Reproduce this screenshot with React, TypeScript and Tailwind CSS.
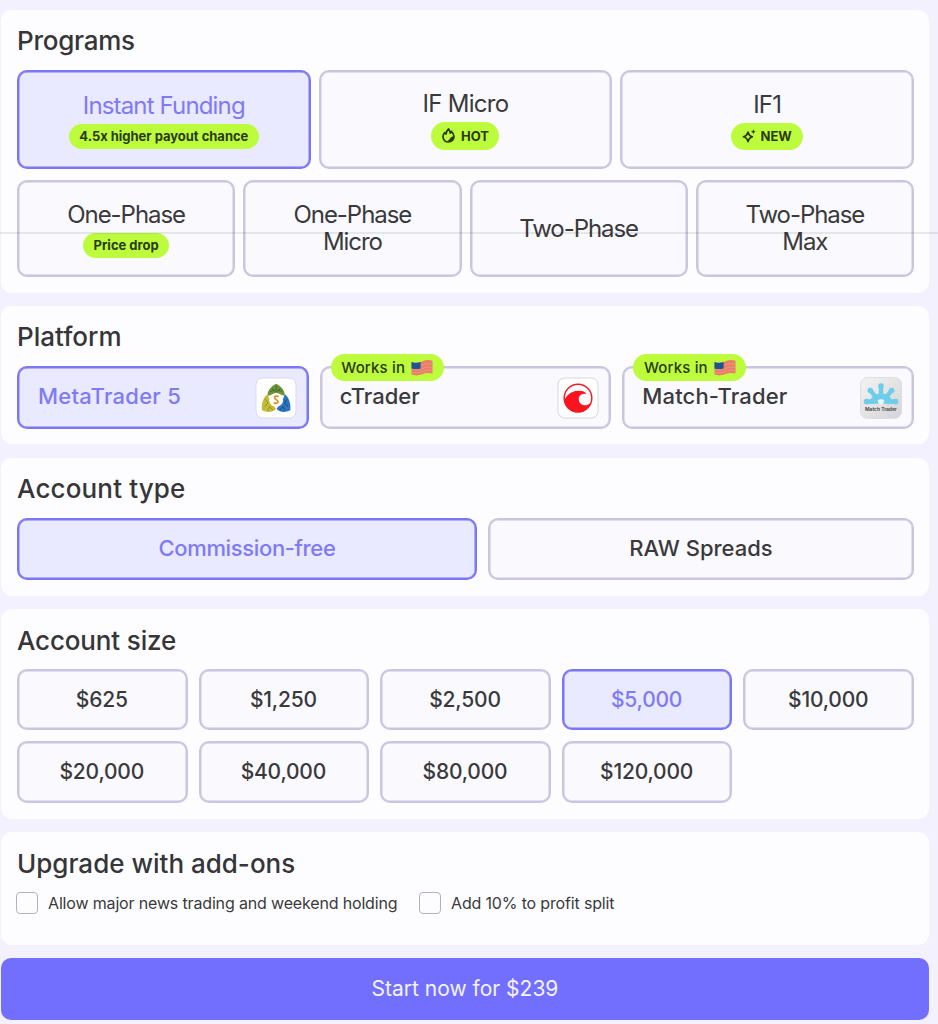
import type { ReactNode } from 'react';

const sizes = ['$625', '$1,250', '$2,500', '$5,000', '$10,000', '$20,000', '$40,000', '$80,000', '$120,000'];

const idle = 'border-[#c9c6e0] bg-[#f9f9fe] text-[#3a3a3c] shadow-[inset_0_0_0_0.5px_#c9c6e0]';
const selected = 'border-[#7b77f2] bg-[#e9e9ff] text-[#7f7af5] shadow-[inset_0_0_0_0.5px_#7b77f2]';

function Section({ title, className, titleClass = '', children }: {
  title: string;
  className: string;
  titleClass?: string;
  children: ReactNode;
}) {
  return (
    <section className={`rounded-[11px] bg-[#fdfdff] pl-4 pr-[15px] ${className}`}>
      <h2 className={`text-[26px] leading-8 font-[550] whitespace-nowrap text-[#363638] ${titleClass}`}>
        <span>{title}</span>
      </h2>
      {children}
    </section>
  );
}

function Box({ active = false, className = '', children }: {
  active?: boolean;
  className?: string;
  children: ReactNode;
}) {
  return (
    <button
      type="button"
      className={`relative flex items-center justify-center rounded-[10px] border-2 whitespace-nowrap ${active ? selected : idle} ${className}`}
    >
      {children}
    </button>
  );
}

function Pill({ className, children }: { className: string; children: ReactNode }) {
  return (
    <span className={`flex items-center justify-center rounded-full bg-[#bcfc3c] text-[#2b3a12] ${className}`}>
      {children}
    </span>
  );
}

function Flame() {
  return (
    <svg className="h-[15px] w-[13px]" viewBox="0 0 13 15" fill="none" stroke="#2b3a12" strokeWidth="1.7" strokeLinejoin="round">
      <path d="M6.6 1C7.6 2.4 8 3.6 8.4 5.2C9 4.7 9.2 4.1 9.4 3.4C11.2 5 12 6.7 12 8.6C12 11.8 9.6 14 6.5 14C3.4 14 1 11.8 1 8.7C1 6.8 1.7 5.5 2.8 4.6C3.2 5.3 3.5 5.7 4 6C4.2 3.9 5.2 2.2 6.6 1Z" />
      <path d="M11.4 8.2C10 8.4 8.6 9.2 8 10.4C7.6 11.4 6.8 12 5.6 12.2C7 14 10 13.6 11.2 11.2Z" fill="#2b3a12" stroke="none" />
    </svg>
  );
}

function Sparkle() {
  return (
    <svg className="h-[14px] w-[14px]" viewBox="0 0 14 14" fill="none" stroke="#2b3a12" strokeWidth="1.7" strokeLinejoin="round">
      <path d="M6 3.2C6.6 5.8 7.7 7 10.4 7.8C7.7 8.6 6.6 9.8 6 12.6C5.4 9.8 4.2 8.6 1.4 7.8C4.2 7 5.4 5.8 6 3.2Z" />
      <path d="M11.3 0.3L12 2L13.7 2.7L12 3.4L11.3 5.1L10.6 3.4L8.9 2.7L10.6 2Z" fill="#2b3a12" stroke="none" />
    </svg>
  );
}

function Flag() {
  return (
    <svg className="h-[18px] w-[22px]" viewBox="0 0 22 18">
      <path d="M0.5 3C5 4.6 8 3.8 11 2.5C14.5 1 18 0.6 21.5 1.8V14.6C18 13.4 14.5 13.8 11 15.2C8 16.4 4.5 17 0.5 15.6Z" fill="#ee7c68" />
      <path d="M0.5 6.5C5 8 8 7.2 11 6C14.5 4.5 18 4.2 21.5 5.3M0.5 10C5 11.5 8 10.7 11 9.5C14.5 8 18 7.7 21.5 8.8M0.5 13.2C5 14.6 8 13.8 11 12.6C14.5 11.1 18 10.8 21.5 11.9" stroke="#df9a7c" strokeWidth="1" fill="none" />
      <path d="M0.5 3C4 4.2 7 4 9.6 3V9.4C6.5 10.4 3.5 10.3 0.5 9.4Z" fill="#205394" />
    </svg>
  );
}

function MetaTraderLogo() {
  return (
    <svg className="h-[42px] w-[42px]" viewBox="0 0 42 42">
      <rect x="1" y="1" width="40" height="40" rx="6.5" fill="#fefefe" stroke="#dcdbe6" />
      <path d="M12.6 19C12.2 13.5 16 9.6 21.2 6.8C26.4 9.6 30 13.5 29.8 19L25.5 17.4C22.8 15.4 19.6 15.4 17 17.4Z" fill="#6f9636" />
      <path d="M12.4 17.2C8 20.5 6.2 27 7 33.2C12.4 35.8 17.6 35.4 21 32L19 29C15.6 28 14.2 25.4 14.4 22Z" fill="#c6bb34" />
      <path d="M30 17.2C34.2 20.5 36 27 35.3 33.2C30 35.8 25 35.4 21.6 32L23.4 29C26.8 28 28.2 25.4 28 22Z" fill="#2c74bd" />
      <g fill="none" strokeWidth="1" opacity=".75">
        <path d="M15 15C17.5 12.6 19.5 12.8 21.2 14.8C23 12.8 25 12.6 27.4 15M21.2 8.5V13M17.5 11.5L19 14.5M25 11.5L23.4 14.5" stroke="#2f5b2b" />
        <path d="M10 22L13 26L9.5 29.5M12.5 33.5L14.5 29.5L17.5 33" stroke="#6f8f32" />
        <path d="M32.4 22L29.4 26L33 29.5M30 33.5L28 29.5L25 33" stroke="#123f78" />
      </g>
      <circle cx="21.2" cy="23" r="6.8" fill="#fffdf4" />
      <path d="M23.7 19.4C20.8 18.6 19.2 19.4 19.6 21C20 22.5 22.8 22.8 23 24.5C23.2 26.4 20.8 26.9 18.8 25.8" stroke="#d88b2d" strokeWidth="1.6" fill="none" />
    </svg>
  );
}

function CTraderLogo() {
  return (
    <svg className="h-[42px] w-[42px]" viewBox="0 0 42 42">
      <rect x="1" y="1" width="40" height="40" rx="6.5" fill="#fefefe" stroke="#d8d6dc" />
      <circle cx="21" cy="21" r="13.8" fill="none" stroke="#f21e26" strokeWidth="1.5" />
      <path d="M7.4 24C8.6 18.6 14 14.2 21 13.8C25.4 13.6 28 14.6 29.6 16.8C25.4 16.6 22.2 18 21.8 21.4C21.4 25 24 27.8 27.4 28.2C29.8 28.4 32 27.4 34 25.4C32.4 31.4 27.4 35.6 21 35.6C14 35.6 8.4 31 7.4 24Z" fill="#f9141f" />
    </svg>
  );
}

function MatchTraderLogo() {
  return (
    <svg className="h-[42px] w-[42px]" viewBox="0 0 42 42">
      <defs>
        <linearGradient id="matchTile" x1="0" y1="0" x2="1" y2="1">
          <stop offset="0" stopColor="#f3f3f3" />
          <stop offset="1" stopColor="#d4d4d6" />
        </linearGradient>
      </defs>
      <rect x="0.5" y="0.5" width="41" height="41" rx="7" fill="url(#matchTile)" stroke="#dedee2" />
      <g stroke="#6dcdea" strokeWidth="4.4" strokeLinecap="round">
        <path d="M21 22V10M17 22L11 14M25 22L31 14M15 24.5L6.5 24.5M27 24.5L35.5 24.5" />
      </g>
      <g fill="#6dcdea">
        <circle cx="21" cy="9" r="2.8" />
        <circle cx="10.3" cy="13.5" r="2.8" />
        <circle cx="31.7" cy="13.5" r="2.8" />
        <circle cx="6.5" cy="24.6" r="2.8" />
        <circle cx="35.5" cy="24.6" r="2.8" />
        <path d="M9 26.5C11 19.5 15 16.5 21 16.5C27 16.5 31 19.5 33 26.5Z" />
      </g>
      <path d="M17.8 23C19.3 21.9 22.7 21.9 24.2 23C24 25.6 22.6 27.2 21 28C19.4 27.2 18 25.6 17.8 23Z" fill="#edf8fc" />
      <text x="5" y="34" textLength="32" fontSize="5" fontWeight="600" fontFamily="Inter, sans-serif" fill="#3b4144">Match Trader</text>
    </svg>
  );
}

function WorksIn() {
  return (
    <Pill className="absolute -top-[14px] left-[9px] h-[27px] w-[113px] gap-[6px] pt-px text-[15px] font-[550]">
      <span>Works in</span>
      <Flag />
    </Pill>
  );
}

export default function App() {
  return (
    <main className="relative flex h-[1024px] w-[938px] flex-col overflow-hidden bg-[#f3f1fe] pt-[10px] pr-[9px] pl-px font-['Inter',sans-serif]">
      <Section title="Programs" className="h-[283px] pt-[15px]" titleClass="tracking-[-0.25px]">
        <div className="mt-[13px] grid grid-cols-3 gap-2 text-[24px] leading-[27px] tracking-[-0.85px]">
          <Box active className="h-[99px] flex-col pt-px">
            <span>Instant Funding</span>
            <Pill className="mt-[5px] h-[25px] w-[190px] text-[13px] leading-4 font-bold tracking-[-0.02px]">4.5x higher payout chance</Pill>
          </Box>
          <Box className="h-[99px] flex-col">
            <span className="tracking-[-0.7px]">IF Micro</span>
            <Pill className="mt-[5px] h-7 w-[68px] gap-[6px] text-[13px] leading-4 font-bold tracking-normal"><Flame />HOT</Pill>
          </Box>
          <Box className="h-[99px] flex-col pt-px">
            <span>IF1</span>
            <Pill className="mt-[5px] mr-px h-[27px] w-[72px] gap-[5px] text-[13px] leading-4 font-bold tracking-normal"><Sparkle />NEW</Pill>
          </Box>
        </div>
        <div className="mt-[11px] grid grid-cols-4 gap-2 text-[24px] leading-[27px] tracking-[-1.05px]">
          <Box className="h-[97px] flex-col pt-px">
            <span>One-Phase</span>
            <Pill className="mt-[5px] h-[25px] w-[86px] text-[13px] leading-4 font-bold tracking-normal">Price drop</Pill>
          </Box>
          <Box className="h-[97px] pb-px"><span>One-Phase<br />Micro</span></Box>
          <Box className="h-[97px]"><span>Two-Phase</span></Box>
          <Box className="h-[97px] pb-px"><span>Two-Phase<br />Max</span></Box>
        </div>
      </Section>

      <Section title="Platform" className="mt-[13px] h-[138px] pt-[15px]">
        <div className="mt-[13px] grid grid-cols-3 gap-[11px] text-[22px] font-[550] tracking-[0.15px]">
          <Box active className="h-[63px] justify-between! pr-[10px] pl-[19px]">
            <span className="pb-[2px] tracking-[0.25px]">MetaTrader 5</span>
            <MetaTraderLogo />
          </Box>
          <Box className="h-[63px] justify-between! pr-[10px] pl-[18px]">
            <WorksIn />
            <span className="pb-[2px] tracking-normal">cTrader</span>
            <CTraderLogo />
          </Box>
          <Box className="h-[63px] justify-between! pr-[10px] pl-[18px]">
            <WorksIn />
            <span className="pb-[2px]">Match-Trader</span>
            <MatchTraderLogo />
          </Box>
        </div>
      </Section>

      <Section title="Account type" className="mt-[14px] h-[138px] pt-[15px]" titleClass="tracking-[0.15px]">
        <div className="mt-[13px] grid grid-cols-[460px_1fr] gap-[11px] text-[22px] font-[550]">
          <Box active className="h-[62px] pb-[2px]"><span className="tracking-[-0.35px]">Commission-free</span></Box>
          <Box className="h-[62px] pb-[2px]"><span>RAW Spreads</span></Box>
        </div>
      </Section>

      <Section title="Account size" className="mt-[13px] h-[210px] pt-4" titleClass="tracking-[-0.15px]">
        <div className="mt-3 grid grid-cols-5 grid-rows-[61px_62px] gap-[11px] text-[21px] font-[550] tracking-[-0.2px]">
          {sizes.map((size) => (
            <Box key={size} active={size === '$5,000'} className="pr-px">
              <span>{size}</span>
            </Box>
          ))}
        </div>
      </Section>

      <Section title="Upgrade with add-ons" className="mt-[13px] h-[113px] pt-4">
        <div className="mt-3 -ml-px flex items-center text-[16px] leading-[22px] tracking-[-0.16px] whitespace-nowrap text-[#3a3a3c]">
          <span className="mr-[10px] h-[22px] w-[22px] rounded-[4px] border-[1.5px] border-[#b3b0bf]" />
          <span className="w-[371px]">Allow major news trading and weekend holding</span>
          <span className="mr-[10px] h-[22px] w-[22px] rounded-[4px] border-[1.5px] border-[#b3b0bf]" />
          <span>Add 10% to profit split</span>
        </div>
      </Section>

      <button type="button" className="mt-[13px] h-[62px] shrink-0 rounded-[10px] bg-[#726fff] text-[21px] text-[#f4f3ff]">
        <span>Start now for $239</span>
      </button>

      <div className="absolute top-[232px] left-0 h-[2px] w-full bg-black/8" />
    </main>
  );
}
